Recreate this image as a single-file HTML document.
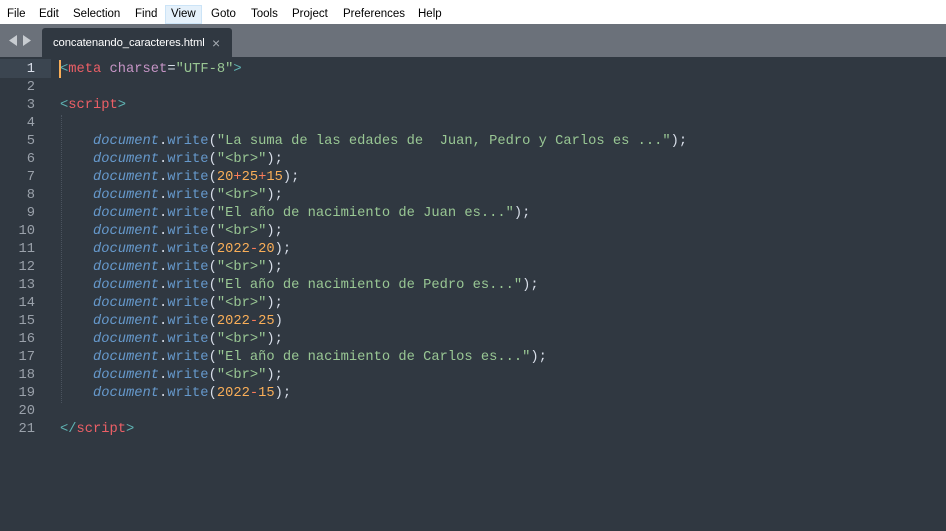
<!DOCTYPE html>
<html><head><style>
body{margin:0;width:946px;height:531px;overflow:hidden;background:#303841;font-family:"Liberation Sans",sans-serif;position:relative}
#menu{position:absolute;left:0;top:0;width:946px;height:24px;background:#fff;font-size:11.5px;color:#000}
#menu span{position:absolute;top:8px}
#menu .v{background:#e5f1fb;border:1px solid #cce4f7;top:5px;height:17px;padding:0 5px;line-height:17px;left:165px}
#topline{position:absolute;left:0;top:0;width:30px;height:2px;background:#333}
#tabs{position:absolute;left:0;top:24px;width:946px;height:33px;background:#6b717a}
#tab{position:absolute;left:42px;top:4px;width:190px;height:29px;background:#303841;border-radius:3px 3px 0 0;color:#fff;font-size:11.3px}
#tab .t{position:absolute;left:11px;top:9px;letter-spacing:-0.1px}
#tab .x{position:absolute;left:170px;top:7px;color:#a6acb3;font-size:14px}
#code{position:absolute;left:0;top:61px;font-family:"Liberation Mono",monospace;font-size:13.75px;line-height:18px;white-space:pre;color:#d8dee9}
.ln{display:inline-block;width:35px;text-align:right;color:#9aa1aa;margin-right:25px}
.row{height:18px}
.tg{color:#ec5f66}.p{color:#5fb4b4}.a{color:#c695c6}.s{color:#99c794}.n{color:#f9ae58}.o{color:#f97b58}.d{color:#6699cc;font-style:italic}.w{color:#6699cc}
#caret{position:absolute;left:59px;top:60px;width:2px;height:18px;background:#f9ae58}
#guide{position:absolute;left:61px;top:115px;height:288px;border-left:1px dotted #4a535e}
</style></head><body>
<div id="topline"></div>
<div id="menu"><span style="left:7px">File</span><span style="left:39px">Edit</span><span style="left:73px">Selection</span><span style="left:135px">Find</span><span class="v">View</span><span style="left:211px">Goto</span><span style="left:251px">Tools</span><span style="left:292px">Project</span><span style="left:343px">Preferences</span><span style="left:418px">Help</span></div>
<div id="tabs"><svg style="position:absolute;left:9px;top:11px" width="24" height="11"><path d="M0 5.5L8 0V11Z M14 0L22 5.5L14 11Z" fill="#c8ccd1"/></svg>
<div id="tab"><span class="t">concatenando_caracteres.html</span><span class="x">×</span></div></div>
<div style="position:absolute;left:0;top:59px;width:51px;height:19px;background:#3b4550"></div>
<div id="guide"></div>
<div id="code"><div class="row"><span class="ln" style="color:#d8dee9">1</span><span class="p">&lt;</span><span class="tg">meta</span> <span class="a">charset</span>=<span class="s">"UTF-8"</span><span class="p">&gt;</span></div><div class="row"><span class="ln">2</span></div><div class="row"><span class="ln">3</span><span class="p">&lt;</span><span class="tg">script</span><span class="p">&gt;</span></div><div class="row"><span class="ln">4</span></div><div class="row"><span class="ln">5</span>    <span class="d">document</span>.<span class="w">write</span>(<span class="s">"La suma de las edades de  Juan, Pedro y Carlos es ..."</span>);</div><div class="row"><span class="ln">6</span>    <span class="d">document</span>.<span class="w">write</span>(<span class="s">"&lt;br&gt;"</span>);</div><div class="row"><span class="ln">7</span>    <span class="d">document</span>.<span class="w">write</span>(<span class="n">20</span><span class="o">+</span><span class="n">25</span><span class="o">+</span><span class="n">15</span>);</div><div class="row"><span class="ln">8</span>    <span class="d">document</span>.<span class="w">write</span>(<span class="s">"&lt;br&gt;"</span>);</div><div class="row"><span class="ln">9</span>    <span class="d">document</span>.<span class="w">write</span>(<span class="s">"El año de nacimiento de Juan es..."</span>);</div><div class="row"><span class="ln">10</span>    <span class="d">document</span>.<span class="w">write</span>(<span class="s">"&lt;br&gt;"</span>);</div><div class="row"><span class="ln">11</span>    <span class="d">document</span>.<span class="w">write</span>(<span class="n">2022</span><span class="o">-</span><span class="n">20</span>);</div><div class="row"><span class="ln">12</span>    <span class="d">document</span>.<span class="w">write</span>(<span class="s">"&lt;br&gt;"</span>);</div><div class="row"><span class="ln">13</span>    <span class="d">document</span>.<span class="w">write</span>(<span class="s">"El año de nacimiento de Pedro es..."</span>);</div><div class="row"><span class="ln">14</span>    <span class="d">document</span>.<span class="w">write</span>(<span class="s">"&lt;br&gt;"</span>);</div><div class="row"><span class="ln">15</span>    <span class="d">document</span>.<span class="w">write</span>(<span class="n">2022</span><span class="o">-</span><span class="n">25</span>)</div><div class="row"><span class="ln">16</span>    <span class="d">document</span>.<span class="w">write</span>(<span class="s">"&lt;br&gt;"</span>);</div><div class="row"><span class="ln">17</span>    <span class="d">document</span>.<span class="w">write</span>(<span class="s">"El año de nacimiento de Carlos es..."</span>);</div><div class="row"><span class="ln">18</span>    <span class="d">document</span>.<span class="w">write</span>(<span class="s">"&lt;br&gt;"</span>);</div><div class="row"><span class="ln">19</span>    <span class="d">document</span>.<span class="w">write</span>(<span class="n">2022</span><span class="o">-</span><span class="n">15</span>);</div><div class="row"><span class="ln">20</span></div><div class="row"><span class="ln">21</span><span class="p">&lt;/</span><span class="tg">script</span><span class="p">&gt;</span></div></div>
<div id="caret"></div>
</body></html>
